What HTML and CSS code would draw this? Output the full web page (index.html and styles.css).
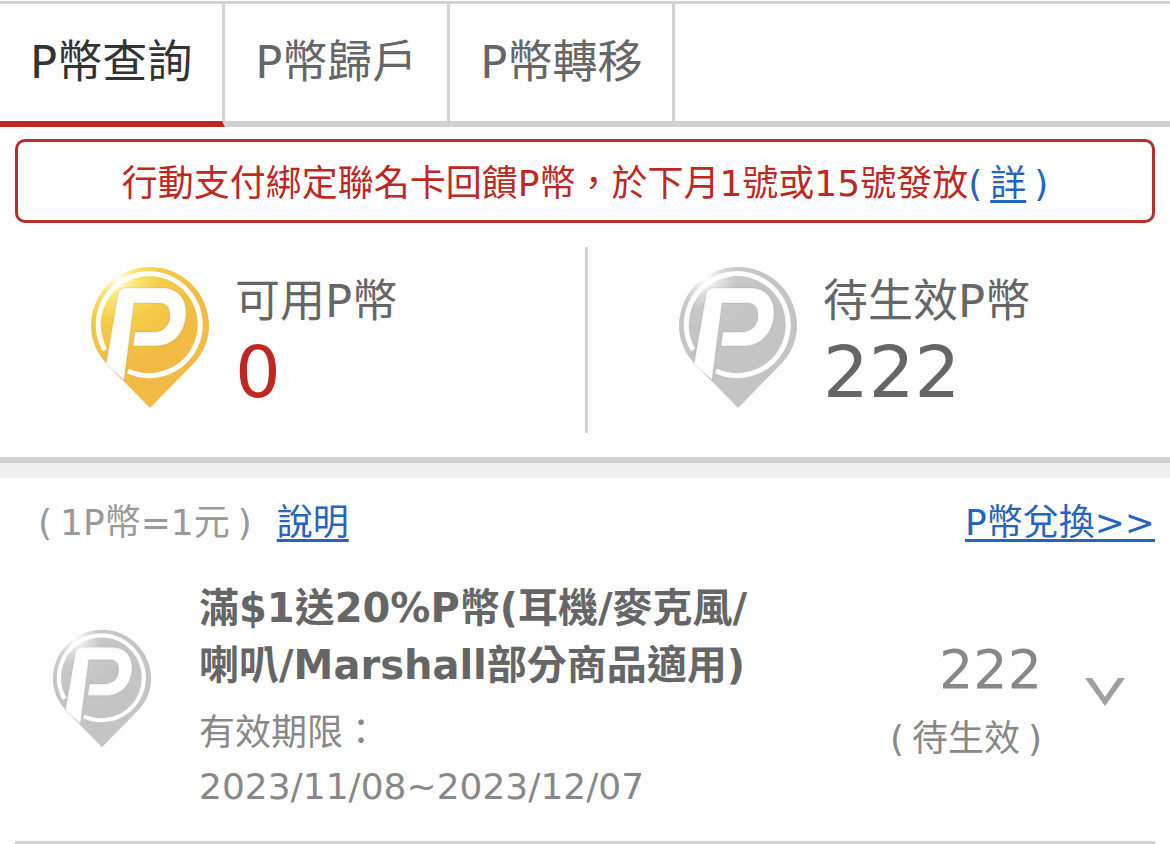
FILE: index.html
```html
<!doctype html>
<html lang="zh-Hant">
    <head>
        <meta charset="utf-8" />
        <meta name="viewport" content="width=device-width" />
        <title>P幣查詢</title>
        <link rel="stylesheet" href="styles.css">
    </head>
    <body>
        <!-- shared coin shape, coloured by the two gradients -->
        <svg class="defs" width="0" height="0" aria-hidden="true">
            <defs>
                <radialGradient id="gold" gradientUnits="userSpaceOnUse" cx="38" cy="24" r="84">
                    <stop offset="0" stop-color="#fffef0" />
                    <stop offset="0.2" stop-color="#fbe878" />
                    <stop offset="0.5" stop-color="#f5cd48" />
                    <stop offset="1" stop-color="#f2bb44" />
                </radialGradient>
                <radialGradient id="silver" gradientUnits="userSpaceOnUse" cx="38" cy="24" r="60">
                    <stop offset="0" stop-color="#ffffff" />
                    <stop offset="0.25" stop-color="#dedede" />
                    <stop offset="0.5" stop-color="#c8c8c8" />
                    <stop offset="1" stop-color="#c4c4c4" />
                </radialGradient>
                <symbol id="coin" viewBox="10 11 120 143">
                    <path d="M70 153L26 108C16 97 11 84 11 71a59 59 0 0 1 118 0c0 13-5 26-15 37z" />
                    <path d="M25 95A51 51 0 1 1 48 116" fill="none" stroke="#fefefe" stroke-width="5" />
                    <path fill="#fefefe" stroke="#000" stroke-opacity="0.05" stroke-width="2" fill-rule="evenodd" d="M46 33h37c14 0 23 10 23 24 0 20-12 34-31 34H53l2-14h18c11 0 17-7 17-17 0-8-4-12-11-12H54L44 125 26 109l12-69c1-5 3-7 8-7z" />
                </symbol>
            </defs>
        </svg>

        <nav class="tabs">
            <a class="tab active" href="#query">P幣查詢</a>
            <a class="tab" href="#account">P幣歸戶</a>
            <a class="tab" href="#transfer">P幣轉移</a>
        </nav>

        <p class="notice">行動支付綁定聯名卡回饋P幣，於下月1號或15號發放<span class="more">(<a class="inner" href="#detail">詳</a>)</span></p>

        <section class="summary">
            <div class="balance">
                <svg class="coin gold" aria-hidden="true"><use href="#coin" /></svg>
                <div>
                    <div class="label">可用P幣</div>
                    <div class="points available">0</div>
                </div>
            </div>
            <div class="balance">
                <svg class="coin silver" aria-hidden="true"><use href="#coin" /></svg>
                <div>
                    <div class="label">待生效P幣</div>
                    <div class="points">222</div>
                </div>
            </div>
        </section>

        <main class="list">
            <div class="list_head">
                <span class="rate">(<span class="inner">1P幣=1元</span>)</span>
                <a href="#help">說明</a>
                <a class="exchange" href="#exchange">P幣兌換&gt;&gt;</a>
            </div>
            <article class="record">
                <svg class="coin small silver" aria-hidden="true"><use href="#coin" /></svg>
                <div class="info">
                    <h2>滿$1送20%P幣(耳機/麥克風/<br>喇叭/Marshall部分商品適用)</h2>
                    <p>有效期限：<br>2023/11/08~2023/12/07</p>
                </div>
                <div class="amount">
                    <div class="value">222</div>
                    <div>(<span class="inner">待生效</span>)</div>
                </div>
                <button class="toggle" type="button" aria-label="展開">
                    <svg viewBox="0 0 40 28" width="40" height="28" aria-hidden="true">
                        <path d="M0 0h7l13 19L33 0h7L20 28z" fill="#a0a0a0" />
                    </svg>
                </button>
            </article>
        </main>
    </body>
</html>
```
FILE: styles.css
```css
body {
    background-color: #fefefe;
    color: #666;
    font-family: "DejaVu Sans", "Noto Sans CJK TC", sans-serif;
    font-size: 36px;

    margin: 0;
    padding-top: 1px;
}

a {
    color: #2864be;
    text-decoration-thickness: 3px;
    text-underline-offset: 4px;
    text-decoration-skip-ink: none;
}

.defs {
    position: absolute;
}

.tabs {
    display: flex;
    border-top: 3px solid #d2d2d2;
    box-shadow: inset 0 -6px #d2d2d2;
}

.tab {
    color: #666;
    font-size: 45px;
    line-height: 117px;
    text-decoration: none;

    padding: 0 30px;
    border-right: 3px solid #d2d2d2;
    border-bottom: 6px solid #d2d2d2;
}

.tab.active {
    color: #333;
    border-bottom-color: #be2822;
}

.notice {
    color: #be2822;
    line-height: 72px;
    text-align: center;

    margin: 12px 15px 24px;
    padding-top: 6px;
    border: 3px solid #b4302a;
    border-radius: 10px;
}

.more {
    color: #2864be;
}

/* text set between loose parentheses */
.inner {
    margin: 0 8px;
}

.summary {
    display: flex;
    padding-bottom: 24px;
    border-bottom: 6px solid #d2d2d2;
}

.balance {
    display: flex;
    gap: 25px;

    box-sizing: border-box;
    width: 50%;
    padding: 19px 0 24px 90px;
}

.balance + .balance {
    border-left: 3px solid #d2d2d2;
}

.coin {
    width: 120px;
    height: 143px;
    flex-shrink: 0;
}

.coin.small {
    width: 100px;
    height: 119px;
}

.gold {
    fill: url(#gold);
}

.silver {
    fill: url(#silver);
}

.label {
    font-size: 45px;
    line-height: 72px;
}

.points {
    font-size: 72px;
    line-height: 69px;
}

.available {
    color: #be2822;
}

.list {
    border-top: 15px solid #f0f0f0;
    padding: 0 15px;
}

.list_head {
    display: flex;
    line-height: 54px;
    padding: 18px 0 30px 23px;
}

.rate {
    color: #999;
    margin-right: 25px;
}

.exchange {
    margin-left: auto;
}

.record {
    color: #888;

    display: flex;
    align-items: flex-start;
    padding: 0 30px 27px 37px;
    border-bottom: 3px solid #d2d2d2;
}

.record .coin {
    margin-top: 49px;
}

.info {
    flex: 1;
    margin-left: 47px;
}

.info h2 {
    color: #666;
    font-size: 40px;
    line-height: 57px;

    margin: 0 0 12px;
}

.info p {
    line-height: 54px;
    margin: 0;
}

.amount {
    line-height: 66px;
    text-align: right;
    padding-top: 54px;
}

.value {
    font-size: 54px;
    line-height: 72px;
}

.toggle {
    background: none;
    border: none;

    margin: 98px 0 0 43px;
    padding: 0;
}

.toggle svg {
    display: block;
}
```
